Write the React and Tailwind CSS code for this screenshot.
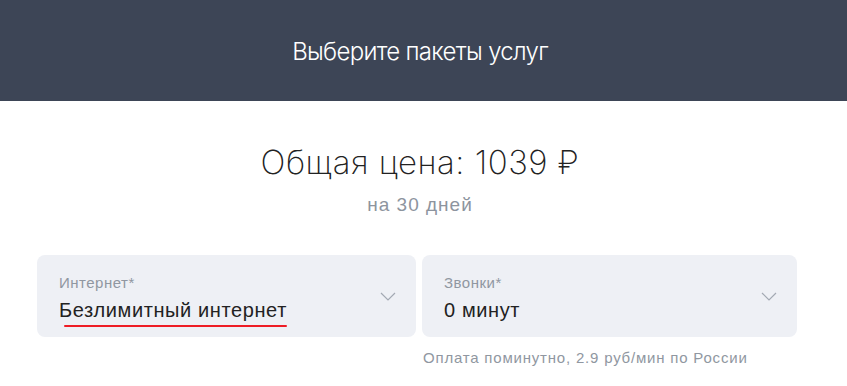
import React from "react";

function Chevron() {
    return (
        <svg width="16" height="9" viewBox="0 0 16 9" fill="none" className="shrink-0">
            <path d="M1 1l7 7 7-7" stroke="#a3a9b3" strokeWidth="1.2" />
        </svg>
    );
}

function SelectCard({ label, value, underline, width }) {
    return (
        <div className={`relative flex h-[82px] items-center rounded-[8px] bg-[#eef0f5] pl-[22px] pr-[20px] ${width}`}>
            <div className="flex flex-1 flex-col pt-[4px]">
                <span className="text-[15px] leading-[18px] tracking-[0.5px] text-[#9097a1]">{label}</span>
                <span className="mt-[6px] text-[20px] leading-[24px] tracking-[0.6px] text-[#222]">{value}</span>
            </div>
            <Chevron />
            {underline ? (
                <span className="absolute left-[27px] top-[70px] h-[2px] w-[223px] rounded-full bg-[#ee1c25]"></span>
            ) : null}
        </div>
    );
}

export default function App() {
    return (
        <div className="h-[386px] w-[847px] overflow-hidden bg-white font-['Liberation_Sans','Arial',sans-serif]">
            <header className="flex h-[101px] w-full items-center bg-[#3d4556]">
                <h1 className="w-[840px] pt-[2px] text-center font-['Inter',sans-serif] text-[24px] font-light tracking-[-0.7px] text-white">
                    Выберите пакеты услуг
                </h1>
            </header>
            <section className="flex w-[840px] flex-col items-center pt-[38px]">
                <h2 className="font-['Inter',sans-serif] text-[33px] leading-[46px] font-extralight tracking-[0.5px] text-[#222]">
                    Общая цена: 1039 ₽
                </h2>
                <p className="mt-[9px] text-[19px] leading-[22px] tracking-[1px] text-[#8d949e]">на 30 дней</p>
            </section>
            <div className="mt-[39px] flex gap-[6px] pl-[37px]">
                <SelectCard label="Интернет*" value="Безлимитный интернет" underline width="w-[379px]" />
                <div className="flex flex-col">
                    <SelectCard label="Звонки*" value="0 минут" width="w-[375px]" />
                    <p className="mt-[12px] pl-[1px] text-[15px] leading-[18px] tracking-[0.8px] text-[#9097a1]">
                        Оплата поминутно, 2.9 руб/мин по России
                    </p>
                </div>
            </div>
        </div>
    );
}
